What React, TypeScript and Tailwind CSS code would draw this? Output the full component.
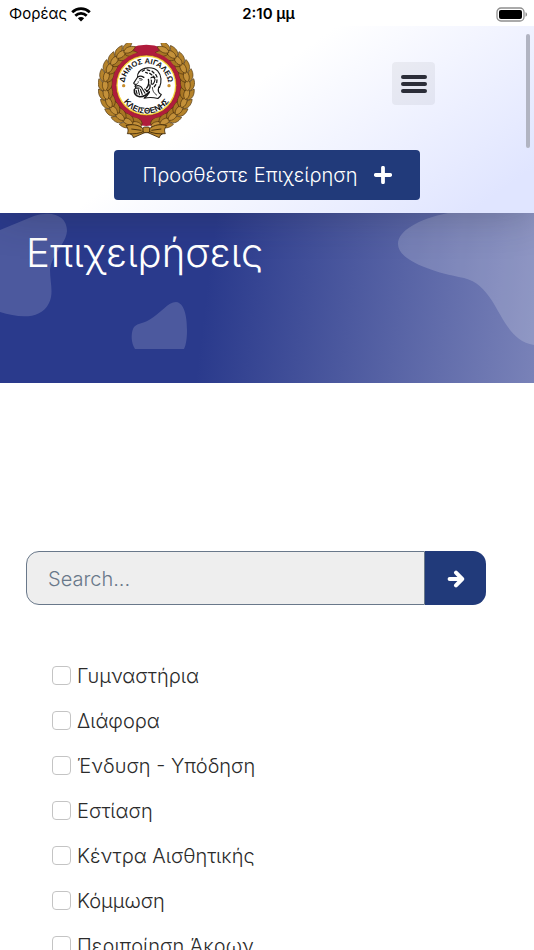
import React, { useState } from 'react';

const categories = [
  'Γυμναστήρια',
  'Διάφορα',
  'Ένδυση - Υπόδηση',
  'Εστίαση',
  'Κέντρα Αισθητικής',
  'Κόμμωση',
  'Περιποίηση Άκρων',
];

const LEAF = 'M0 4 C-12 -5 -10 -22 1 -35 C11 -22 12 -5 0 4 Z';

// one half of the laurel, from the ribbon up to the tip
const stations = Array.from({ length: 12 }, (_, i) => 98 + i * 12.8);

function LaurelHalf() {
  return (
    <g fill="#b5832b" stroke="#4a300c" strokeWidth="1.8" strokeLinejoin="round">
      {stations.map((angle) => {
        const rad = (angle * Math.PI) / 180;
        const x = 167 + 124 * Math.cos(rad);
        const y = 150 + 120 * Math.sin(rad);
        return (
          <g key={angle} transform={`translate(${x} ${y}) rotate(${angle + 184})`}>
            <path d={LEAF} transform="translate(-7 0) rotate(-20)" />
            <path d={LEAF} fill="#a87624" transform="translate(7 0) rotate(20)" />
            <path d={LEAF} fill="#c4913a" />
          </g>
        );
      })}
    </g>
  );
}

function Crest() {
  return (
    <svg viewBox="22 21 291 285" className="h-[95px] w-[97px]" role="img" aria-label="Δήμος Αιγάλεω">
      <defs>
        <path id="arc-top" d="M103 165 A66 66 0 1 1 231 165" />
        <path id="arc-bottom" d="M85 137 A83 83 0 1 0 249 137" />
      </defs>
      <circle cx="167" cy="148" r="122" fill="#b01c3c" />
      <LaurelHalf />
      <g transform="translate(334 0) scale(-1 1)">
        <LaurelHalf />
      </g>
      <circle cx="167" cy="148" r="102" fill="#b01c3c" />
      <circle cx="167" cy="148" r="91" fill="#f5d63a" stroke="#8d1a2b" strokeWidth="2" />
      <circle cx="167" cy="148" r="86" fill="#ffffff" />
      <g fill="#bd8a30" stroke="#3b2608" strokeWidth="2.6" strokeLinejoin="round">
        <path d="M158 282 L118 293 L126 299 L128 305 L164 289 Z" />
        <path d="M176 282 L216 293 L208 299 L206 305 L170 289 Z" />
        <path d="M160 280 C142 264 122 264 106 269 C114 278 113 286 110 293 C130 295 148 292 160 286 Z" />
        <path d="M174 280 C192 264 212 264 228 269 C220 278 221 286 224 293 C204 295 186 292 174 286 Z" />
        <path d="M122 279 L152 283 M212 279 L182 283" />
        <rect x="157" y="273" width="20" height="17" rx="5" />
      </g>
      <circle cx="99" cy="149" r="5" fill="#c98e2c" />
      <circle cx="235" cy="149" r="5" fill="#c98e2c" />
      <g fill="#151515" fontFamily="'Liberation Sans', sans-serif" fontWeight="700" fontSize="23" textAnchor="middle">
        <text>
          <textPath href="#arc-top" startOffset="50%">ΔΗΜΟΣ ΑΙΓΑΛΕΩ</textPath>
        </text>
        <text fontSize="25">
          <textPath href="#arc-bottom" startOffset="50%">ΚΛΕΙΣΘΕΝΗΣ</textPath>
        </text>
      </g>
      <g transform="translate(15 9) scale(0.92)" fill="none" stroke="#151515" strokeWidth="3.6" strokeLinecap="round" strokeLinejoin="round">
        <path d="M141 108 C152 92 185 88 202 104 C215 118 216 140 208 158" />
        <path d="M141 108 C136 114 136 119 137 124 L124 144 C126 148 129 148 132 148 L128 154 L131 158 L126 166" />
        <path d="M126 166 C125 177 131 186 143 188 C157 189 166 183 175 172" strokeWidth="5" />
        <path d="M206 156 C202 168 205 177 214 181 M175 174 C170 183 164 189 158 193 C174 189 192 191 203 194 C208 190 212 186 214 181" />
        <path d="M137 124 C144 119 151 121 157 125" strokeWidth="4.5" />
        <path d="M142 129 C146 127 151 129 153 133 M144 134 h6" strokeWidth="2.6" />
        <path d="M132 148 C138 146 140 143 139 139" strokeWidth="2.4" />
        <path d="M131 154 C139 150 149 153 152 162 M131 160 h11" strokeWidth="4" />
        <path d="M180 127 C188 120 197 129 192 138 C190 145 186 149 182 147 C179 143 184 139 181 134" />
        <path d="M172 132 C174 142 174 152 166 160 M177 150 C179 160 173 167 166 171" strokeWidth="4.5" />
        <path d="M132 168 L135 179 M139 165 L143 182 M146 164 L152 181 M153 164 L161 177 M160 163 L169 172" strokeWidth="3.6" />
        <path d="M152 105 L159 101 M168 101 L176 103 M184 105 L190 111 M196 116 L200 124 M176 112 L183 117 M200 133 L199 142 M163 109 L169 111 M188 121 L193 126 M196 149 L191 156" strokeWidth="4.2" />
        <path d="M185 158 C185 169 190 177 199 183" strokeWidth="2.6" />
      </g>
    </svg>
  );
}

function StatusBar() {
  return (
    <div className="relative z-20 grid h-[26px] shrink-0 grid-cols-3 items-center bg-white pl-[9px] pr-1.5 pt-0.5 text-[15px] text-black">
      <div className="flex items-center gap-1">
        <span>Φορέας</span>
        <svg viewBox="0 0 20 15" className="h-[15px] w-5" aria-hidden="true">
          <g fill="none" stroke="#000" strokeWidth="2.8">
            <path d="M1.2 5.2 C6.2 .5 13.8 .5 18.8 5.2" />
            <path d="M4.3 8.7 C7.6 5.6 12.4 5.6 15.7 8.7" />
          </g>
          <path d="M6.8 11.3 C8.6 9.5 11.4 9.5 13.2 11.3 L10 14.5 Z" />
        </svg>
      </div>
      <span className="text-center font-semibold">2:10 μμ</span>
      <svg viewBox="0 0 32 15" className="h-[15px] w-8 justify-self-end" aria-hidden="true">
        <rect x="1" y="1" width="27" height="13" rx="4" fill="none" stroke="#8e8e8e" strokeWidth="1.3" />
        <rect x="3" y="3" width="23" height="9" rx="2" />
        <path d="M29.5 5.3 C31.6 6 31.6 9 29.5 9.7 Z" fill="#8e8e8e" />
      </svg>
    </div>
  );
}

function Header() {
  return (
    <header className="relative z-10 h-[187px] shrink-0 bg-[linear-gradient(145deg,#ffffff_42%,#e0e5ff_92%)] pt-[17px] shadow-[0_0_40px_rgba(35,35,45,0.3)]">
      <div className="grid grid-cols-[55fr_45fr] justify-items-center">
        <a href="#home">
          <Crest />
        </a>
        <button
          type="button"
          aria-label="Menu"
          className="mt-[19px] flex h-[43px] w-[43px] flex-col items-center justify-center gap-[3px] rounded-[4px] bg-black/5"
        >
          <span className="h-1 w-[26px] rounded-full bg-[#2b2d38]" />
          <span className="h-1 w-[26px] rounded-full bg-[#2b2d38]" />
          <span className="h-1 w-[26px] rounded-full bg-[#2b2d38]" />
        </button>
      </div>
      <button
        type="button"
        className="mx-auto mt-3 flex h-[50px] w-[306px] items-center justify-center gap-4 rounded-[4px] bg-[#213a7a] text-[20px] font-light text-white"
      >
        <span>Προσθέστε Επιχείρηση</span>
        <svg viewBox="0 0 18 18" className="h-[18px] w-[18px]" aria-hidden="true">
          <path d="M9 1.8 V16.2 M1.8 9 H16.2" stroke="#fff" strokeWidth="3.8" strokeLinecap="round" />
        </svg>
      </button>
      <div className="absolute right-1 top-2 h-[114px] w-1 rounded-full bg-[#b1b4c2]" />
    </header>
  );
}

function Hero() {
  return (
    <section className="relative h-[170px] shrink-0 overflow-hidden bg-[linear-gradient(97deg,#2a3a8c_39%,#7982b8_100%)]">
      <svg viewBox="0 0 67 105" className="absolute left-0 top-0 h-[105px] w-[67px]" aria-hidden="true">
        <path d="M0 17 L34 3 C54 -3 67 4 67 18 C66 31 52 41 50 56 C50 70 54 80 49 90 C41 107 19 105 0 99 Z" fill="#fff" fillOpacity="0.16" />
      </svg>
      <svg viewBox="0 0 56 48" className="absolute left-[131px] top-[89px] h-12 w-14" aria-hidden="true">
        <path d="M4 47 C0 41 0 32 2 27 C4 21 12 22 18 18 C30 11 37 0 45 0 C54 1 56 16 56 28 C56 36 55 43 53 47 Z" fill="#fff" fillOpacity="0.16" />
      </svg>
      <svg viewBox="0 0 136 132" className="absolute right-0 top-0 h-[132px] w-[136px]" aria-hidden="true">
        <path d="M50 0 C20 6 0 18 0 31 C0 46 29 58 66 65 C102 74 100 126 136 132 V0 Z" fill="#fff" fillOpacity="0.18" />
      </svg>
      <h1 className="relative px-[26px] pt-4 text-[40px] font-light leading-[48px] text-white">Επιχειρήσεις</h1>
    </section>
  );
}

export default function App() {
  const [query, setQuery] = useState('');
  const [selected, setSelected] = useState<string[]>([]);

  const toggle = (name: string) => {
    setSelected(prev => (prev.includes(name) ? prev.filter(c => c !== name) : [...prev, name]));
  };

  return (
    <div className="flex h-screen flex-col overflow-hidden bg-white font-[Inter,'Noto_Sans',sans-serif]">
      <StatusBar />
      <Header />
      <Hero />

      <main className="pl-[26px] pr-12 pt-[168px]">
        <form className="flex h-[54px]" onSubmit={(e) => e.preventDefault()}>
          <input
            type="search"
            aria-label="Search"
            placeholder="Search..."
            value={query}
            onChange={(e) => setQuery(e.target.value)}
            className="min-w-0 flex-1 rounded-l-[13px] border border-[#69788a] bg-[#eeeeee] px-[21px] pt-0.5 text-[20px] font-light text-[#69788a] outline-none placeholder:text-[#69788a]"
          />
          <button
            type="submit"
            aria-label="Submit search"
            className="flex w-[61px] items-center justify-center rounded-r-[13px] bg-[#213a7a] pt-0.5"
          >
            <svg viewBox="0 0 18 18" className="h-[18px] w-[18px]" aria-hidden="true">
              <path d="M2.6 9 H14 M9 2.6 L15.2 9 L9 15.4" fill="none" stroke="#fff" strokeWidth="4" strokeLinecap="round" strokeLinejoin="round" />
            </svg>
          </button>
        </form>

        <ul className="mt-12 pl-[26px]">
          {categories.map((name) => (
            <li key={name} className="h-[45px]">
              <label className="flex h-[45px] items-center gap-1.5 text-[20px] font-light text-[#2b2b2b]">
                <input
                  type="checkbox"
                  checked={selected.includes(name)}
                  onChange={() => toggle(name)}
                  className="h-[19px] w-[19px] shrink-0 appearance-none rounded-[4px] border border-[#c4c4c4] bg-white checked:bg-[#213a7a]"
                />
                <span>{name}</span>
              </label>
            </li>
          ))}
        </ul>
      </main>
    </div>
  );
}
